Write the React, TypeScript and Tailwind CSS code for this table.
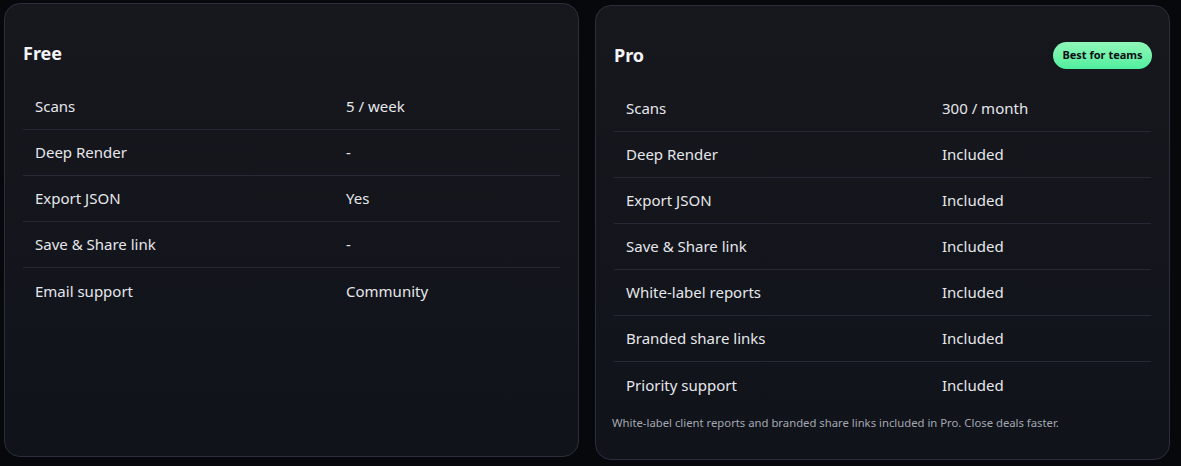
const freeRows = [
  ["Scans", "5 / week"],
  ["Deep Render", "-"],
  ["Export JSON", "Yes"],
  ["Save & Share link", "-"],
  ["Email support", "Community"],
];

const proRows = [
  ["Scans", "300 / month"],
  ["Deep Render", "Included"],
  ["Export JSON", "Included"],
  ["Save & Share link", "Included"],
  ["White-label reports", "Included"],
  ["Branded share links", "Included"],
  ["Priority support", "Included"],
];

function PlanTable({ rows, labelWidth }: { rows: string[][]; labelWidth: string }) {
  return (
    <div className="flex flex-col">
      {rows.map(([label, value], i) => (
        <div
          key={label}
          className={
            "flex h-[46px] items-center text-[15px] text-[#e6e7eb] " +
            (i < rows.length - 1 ? "border-b border-[#262834]" : "")
          }
        >
          <div className={"pl-[12px] " + labelWidth}>{label}</div>
          <div className="pl-[11px]">{value}</div>
        </div>
      ))}
    </div>
  );
}

export default function App() {
  return (
    <div
      className="flex h-[466px] w-[1181px] gap-4 overflow-hidden bg-[#07080b] pl-1 pt-[3px]"
      style={{ fontFamily: '"Noto Sans", "Open Sans", sans-serif' }}
    >
      {/* Free */}
      <div className="flex h-[454px] w-[575px] flex-col rounded-2xl border border-[#2b2e3d] bg-gradient-to-b from-[#17181e] to-[#10131a] px-[18px] pt-[35px]">
        <div className="flex h-[28px] items-center">
          <h3 className="text-[18px] font-bold text-[#f3f4f6]">Free</h3>
        </div>
        <div className="mt-[17px]">
          <PlanTable rows={freeRows} labelWidth="w-[312px]" />
        </div>
      </div>

      {/* Pro */}
      <div className="mt-[2px] flex h-[455px] w-[575px] flex-col rounded-2xl border border-[#2b2e3d] bg-gradient-to-b from-[#17181e] to-[#10131a] px-[18px] pt-[35px]">
        <div className="flex h-[28px] items-center justify-between">
          <h3 className="text-[18px] font-bold text-[#f3f4f6]">Pro</h3>
          <span className="mr-[-1px] flex h-[27px] w-[99px] items-center justify-center rounded-full bg-gradient-to-b from-[#8ef7b8] to-[#4eef9f] text-[11px] font-bold text-[#0b0f14]">
            Best for teams
          </span>
        </div>
        <div className="mt-[17px]">
          <PlanTable rows={proRows} labelWidth="w-[317px]" />
        </div>
        <p className="-ml-[2px] mt-[7px] text-[11.3px] text-[#a3a7b1]">
          White-label client reports and branded share links included in Pro. Close deals faster.
        </p>
      </div>
    </div>
  );
}
